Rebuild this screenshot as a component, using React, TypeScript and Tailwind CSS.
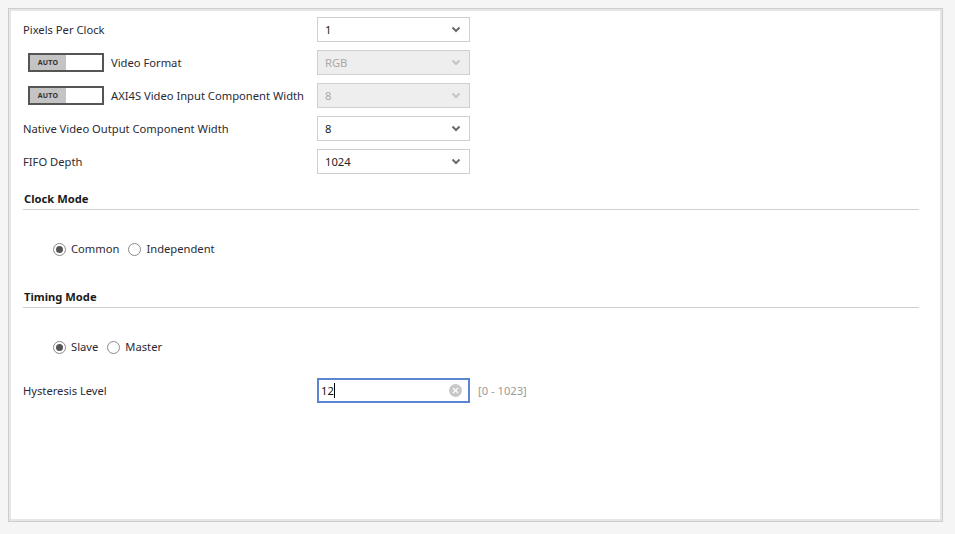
import { X } from "lucide-react";

const font = { fontFamily: '"Noto Sans", "Open Sans", sans-serif' };

function Chevron({ disabled }: { disabled?: boolean }) {
  return (
    <svg width="10" height="7" viewBox="0 0 10 7" className="shrink-0">
      <path
        d="M1.5 1.5 L5 5 L8.5 1.5"
        fill="none"
        stroke={disabled ? "#c4c4c4" : "#6b6b6b"}
        strokeWidth="2"
      />
    </svg>
  );
}

function Select({ value, disabled }: { value: string; disabled?: boolean }) {
  return (
    <div
      className={`w-[153px] h-[25px] border border-[#cfcfcf] flex items-center justify-between pl-[7px] pr-[8px] ${
        disabled ? "bg-[#eeeeee] text-[#a8a8a8]" : "bg-white text-[#222]"
      }`}
    >
      <span>{value}</span>
      <Chevron disabled={disabled} />
    </div>
  );
}

function AutoToggle() {
  return (
    <div className="w-[76px] h-[19px] border-2 border-[#555] flex bg-white">
      <div className="w-[36px] bg-[#c4c4c4] flex items-center justify-center text-[7px] font-bold text-[#333] tracking-[0.2px]">
        AUTO
      </div>
    </div>
  );
}

function Row({
  label,
  value,
  disabled,
  auto,
}: {
  label: string;
  value: string;
  disabled?: boolean;
  auto?: boolean;
}) {
  return (
    <div className="flex items-center h-[33px]">
      <div className="w-[294px] flex items-center">
        {auto ? (
          <>
            <div className="ml-[5px] mr-[7px]">
              <AutoToggle />
            </div>
            <span>{label}</span>
          </>
        ) : (
          <span>{label}</span>
        )}
      </div>
      <Select value={value} disabled={disabled} />
    </div>
  );
}

function Radio({ label, checked }: { label: string; checked?: boolean }) {
  return (
    <label className="flex items-center gap-[5px]">
      <span className="w-[13px] h-[13px] rounded-full border border-[#8a8a8a] bg-white flex items-center justify-center">
        {checked && <span className="w-[7px] h-[7px] rounded-full bg-[#555]" />}
      </span>
      <span>{label}</span>
    </label>
  );
}

function Section({ title }: { title: string }) {
  return (
    <div className="pr-[21px]">
      <div className="font-bold text-[#1a1a1a] pl-[1px] pb-[2px]">{title}</div>
      <div className="h-[1px] bg-[#d0d0d0]" />
    </div>
  );
}

export default function App() {
  return (
    <div
      className="w-[955px] h-[534px] bg-[#f5f5f5] pt-[8px] pl-[8px] text-[11.2px] leading-[16px] text-[#2a2a36]"
      style={font}
    >
      <div className="w-[935px] h-[514px] border border-[#cdcdcd]">
        <div className="h-full border-2 border-[#e6e6e6] bg-white pl-[12px] pt-[2px]">
          <Row label="Pixels Per Clock" value="1" />
          <Row label="Video Format" value="RGB" disabled auto />
          <Row label="AXI4S Video Input Component Width" value="8" disabled auto />
          <Row label="Native Video Output Component Width" value="8" />
          <Row label="FIFO Depth" value="1024" />

          <div className="mt-[13px]">
            <Section title="Clock Mode" />
          </div>
          <div className="flex items-center gap-[9px] pl-[30px] mt-[31px]">
            <Radio label="Common" checked />
            <Radio label="Independent" />
          </div>

          <div className="mt-[32px]">
            <Section title="Timing Mode" />
          </div>
          <div className="flex items-center gap-[9px] pl-[30px] mt-[31px]">
            <Radio label="Slave" checked />
            <Radio label="Master" />
          </div>

          <div className="flex items-center mt-[23px]">
            <div className="w-[294px]">Hysteresis Level</div>
            <div className="w-[153px] h-[25px] border-2 border-[#5a86d1] flex items-center justify-between pl-[2px] pr-[6px] bg-white text-[#111]">
              <span className="flex items-center">
                12<span className="w-[1px] h-[15px] bg-black" />
              </span>
              <span className="w-[13px] h-[13px] rounded-full bg-[#c8c8c8] flex items-center justify-center">
                <X size={9} strokeWidth={3} color="white" />
              </span>
            </div>
            <span className="ml-[8px] text-[#9a9a9a]">[0 - 1023]</span>
          </div>
        </div>
      </div>
    </div>
  );
}
